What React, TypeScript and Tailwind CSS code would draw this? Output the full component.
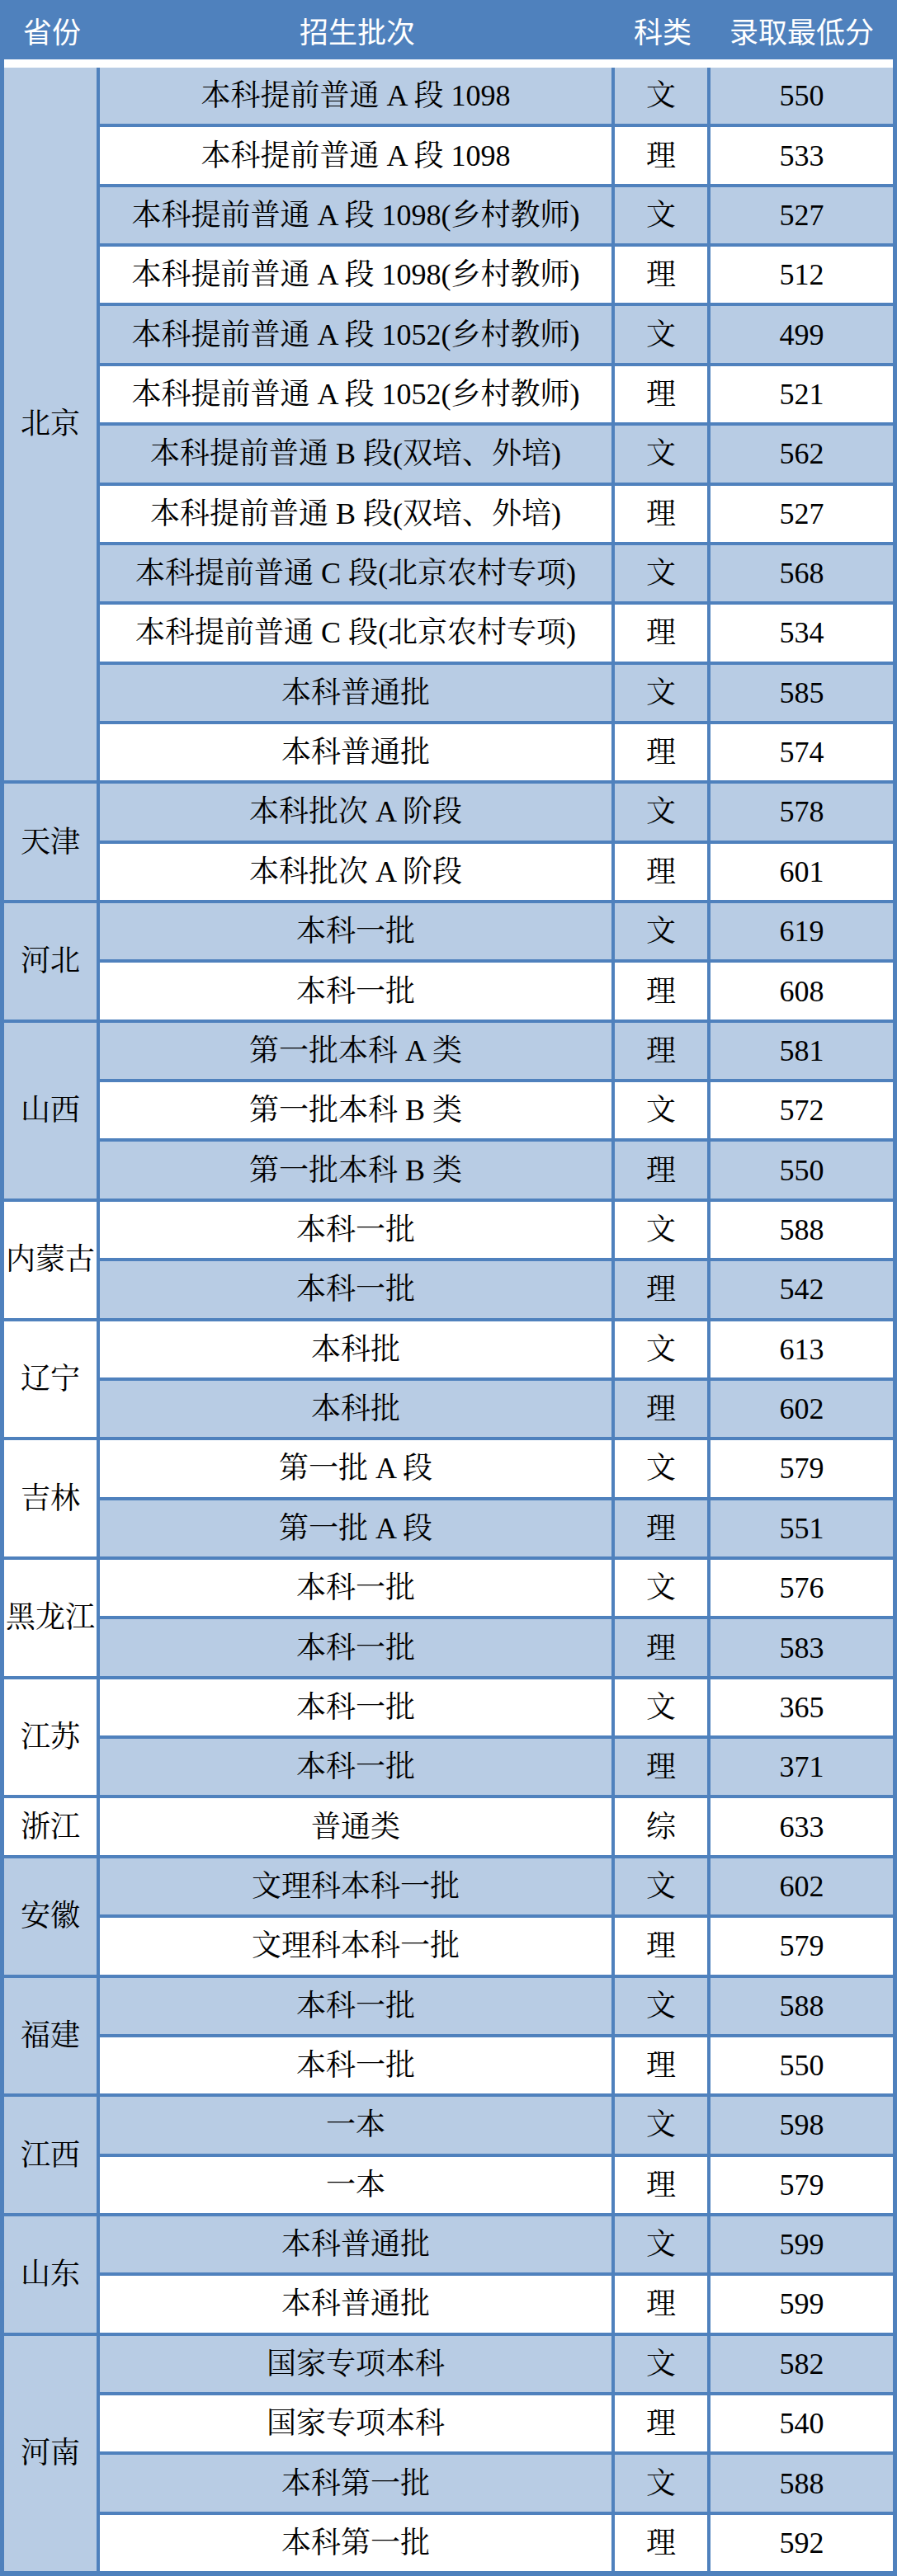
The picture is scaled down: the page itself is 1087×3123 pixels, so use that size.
import React from "react";

type Row = { batch: string; kind: string; score: string };
type Group = { prov: string; blue: boolean; rows: Row[] };

const groups: Group[] = [
  {
    prov: "北京",
    blue: true,
    rows: [
      { batch: "本科提前普通 A 段 1098", kind: "文", score: "550" },
      { batch: "本科提前普通 A 段 1098", kind: "理", score: "533" },
      { batch: "本科提前普通 A 段 1098(乡村教师)", kind: "文", score: "527" },
      { batch: "本科提前普通 A 段 1098(乡村教师)", kind: "理", score: "512" },
      { batch: "本科提前普通 A 段 1052(乡村教师)", kind: "文", score: "499" },
      { batch: "本科提前普通 A 段 1052(乡村教师)", kind: "理", score: "521" },
      { batch: "本科提前普通 B 段(双培、外培)", kind: "文", score: "562" },
      { batch: "本科提前普通 B 段(双培、外培)", kind: "理", score: "527" },
      { batch: "本科提前普通 C 段(北京农村专项)", kind: "文", score: "568" },
      { batch: "本科提前普通 C 段(北京农村专项)", kind: "理", score: "534" },
      { batch: "本科普通批", kind: "文", score: "585" },
      { batch: "本科普通批", kind: "理", score: "574" },
    ],
  },
  {
    prov: "天津",
    blue: true,
    rows: [
      { batch: "本科批次 A 阶段", kind: "文", score: "578" },
      { batch: "本科批次 A 阶段", kind: "理", score: "601" },
    ],
  },
  {
    prov: "河北",
    blue: true,
    rows: [
      { batch: "本科一批", kind: "文", score: "619" },
      { batch: "本科一批", kind: "理", score: "608" },
    ],
  },
  {
    prov: "山西",
    blue: true,
    rows: [
      { batch: "第一批本科 A 类", kind: "理", score: "581" },
      { batch: "第一批本科 B 类", kind: "文", score: "572" },
      { batch: "第一批本科 B 类", kind: "理", score: "550" },
    ],
  },
  {
    prov: "内蒙古",
    blue: false,
    rows: [
      { batch: "本科一批", kind: "文", score: "588" },
      { batch: "本科一批", kind: "理", score: "542" },
    ],
  },
  {
    prov: "辽宁",
    blue: false,
    rows: [
      { batch: "本科批", kind: "文", score: "613" },
      { batch: "本科批", kind: "理", score: "602" },
    ],
  },
  {
    prov: "吉林",
    blue: false,
    rows: [
      { batch: "第一批 A 段", kind: "文", score: "579" },
      { batch: "第一批 A 段", kind: "理", score: "551" },
    ],
  },
  {
    prov: "黑龙江",
    blue: false,
    rows: [
      { batch: "本科一批", kind: "文", score: "576" },
      { batch: "本科一批", kind: "理", score: "583" },
    ],
  },
  {
    prov: "江苏",
    blue: false,
    rows: [
      { batch: "本科一批", kind: "文", score: "365" },
      { batch: "本科一批", kind: "理", score: "371" },
    ],
  },
  {
    prov: "浙江",
    blue: false,
    rows: [{ batch: "普通类", kind: "综", score: "633" }],
  },
  {
    prov: "安徽",
    blue: true,
    rows: [
      { batch: "文理科本科一批", kind: "文", score: "602" },
      { batch: "文理科本科一批", kind: "理", score: "579" },
    ],
  },
  {
    prov: "福建",
    blue: true,
    rows: [
      { batch: "本科一批", kind: "文", score: "588" },
      { batch: "本科一批", kind: "理", score: "550" },
    ],
  },
  {
    prov: "江西",
    blue: true,
    rows: [
      { batch: "一本", kind: "文", score: "598" },
      { batch: "一本", kind: "理", score: "579" },
    ],
  },
  {
    prov: "山东",
    blue: true,
    rows: [
      { batch: "本科普通批", kind: "文", score: "599" },
      { batch: "本科普通批", kind: "理", score: "599" },
    ],
  },
  {
    prov: "河南",
    blue: true,
    rows: [
      { batch: "国家专项本科", kind: "文", score: "582" },
      { batch: "国家专项本科", kind: "理", score: "540" },
      { batch: "本科第一批", kind: "文", score: "588" },
      { batch: "本科第一批", kind: "理", score: "592" },
    ],
  },
];

export default function App() {
  let idx = 0;
  return (
    <div className="w-[1087px] bg-white font-['Liberation_Serif','Noto_Serif_CJK_SC','Noto_Sans_CJK_SC',serif] text-[36px] leading-none text-black">
      {/* header */}
      <div className="flex h-[72px] bg-[#4F81BD] text-white font-['Noto_Sans_CJK_SC',sans-serif] text-[35px] font-normal">
        <div className="w-[121px] pl-[5px] flex items-center justify-center">省份</div>
        <div className="w-[624px] flex items-center justify-center">招生批次</div>
        <div className="w-[116px] flex items-center justify-center">科类</div>
        <div className="w-[226px] pr-[5px] flex items-center justify-center">录取最低分</div>
      </div>
      {/* white gap */}
      <div className="h-[10px] border-x-[5px] border-[#4F81BD] bg-white" />
      {/* body */}
      <div className="border-x-[5px] border-b-[6px] border-[#4F81BD]">
        {groups.map((g, gi) => {
          const lastGroup = gi === groups.length - 1;
          return (
            <div
              key={g.prov}
              className={`flex ${lastGroup ? "" : "border-b-4 border-[#4F81BD]"}`}
            >
              <div
                className={`w-[112px] shrink-0 flex items-center justify-center whitespace-nowrap ${
                  g.blue ? "bg-[#B8CCE4]" : "bg-white"
                }`}
              >
                {g.prov}
              </div>
              <div className="flex-1 border-l-4 border-[#4F81BD]">
                {g.rows.map((r, ri) => {
                  const blue = idx % 2 === 0;
                  idx++;
                  const lastRow = ri === g.rows.length - 1;
                  return (
                    <div
                      key={ri}
                      className={`flex ${
                        lastRow
                          ? "h-[68.36px]"
                          : "h-[72.36px] border-b-4 border-[#4F81BD]"
                      } ${blue ? "bg-[#B8CCE4]" : "bg-white"}`}
                    >
                      <div className="w-[620px] flex items-center justify-center whitespace-pre">
                        {r.batch}
                      </div>
                      <div className="w-[116px] border-l-4 border-[#4F81BD] flex items-center justify-center">
                        {r.kind}
                      </div>
                      <div className="flex-1 border-l-4 border-[#4F81BD] flex items-center justify-center">
                        {r.score}
                      </div>
                    </div>
                  );
                })}
              </div>
            </div>
          );
        })}
      </div>
    </div>
  );
}
